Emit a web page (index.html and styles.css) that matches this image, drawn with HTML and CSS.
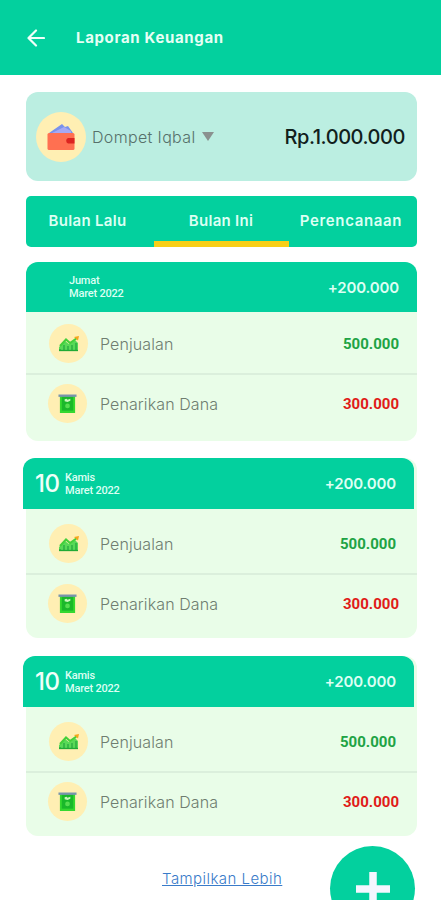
FILE: index.html
```html
<!DOCTYPE html>
<html lang="id">
<head>
<meta charset="utf-8">
<title>Laporan Keuangan</title>
<link rel="stylesheet" href="styles.css">
</head>
<body>
<svg class="defs" aria-hidden="true">
  <symbol id="chart" viewBox="0 0 20 16">
    <path d="M0 14V11L6 5L10 8L16 4L19 7V15H1Z" fill="#58d957"/>
    <path d="M1 10L7 3.500L11 7L18 2" fill="none" stroke="#43cf3b" stroke-width="2"/>
    <path d="M1 13v2M5 9v6M9 10v5M13 9v6M17 7v8" stroke="#27a83f" stroke-width="1.300"/>
    <path d="M0 14.500H19" stroke="#20aa35" stroke-width="1.300"/>
    <path d="M15 1L20 0L19 4.500Z" fill="#f6a51b"/>
  </symbol>
  <symbol id="cash" viewBox="0 0 20 20">
    <path d="M2 1H18V19.500H2Z" fill="#35d82f"/>
    <path d="M4 2H16V17H4Z" fill="#19b82a"/>
    <path d="M0.500 0H19.500V2.500H0.500Z" fill="#7894ac"/>
    <path d="M7 5L9 4.500L10 5.500L13 4.500V6.500L10 8L7 7Z" fill="#c8f5bc"/>
    <circle cx="10" cy="12" r="2.500" fill="#55dd50"/>
  </symbol>
</svg>
<header class="topbar">
  <svg class="back" viewBox="0 0 18 18"><path d="M17 9H2M9 1.500L1.500 9L9 16.500"/></svg>
  <h1>Laporan Keuangan</h1>
</header>
<main>
  <section class="wallet">
    <span class="wallet-icon"><svg viewBox="0 0 28 28"><path d="M2 10L15 1L18 4L21 3L26 10Z" fill="#7992ec"/><path d="M5 10L17 4L24 8V11Z" fill="#a6a9f3"/><rect x="0.500" y="10" width="27" height="17" rx="1.500" fill="#ff7051"/><path d="M27.500 15H21A3 3 0 0 0 21 20.500H27.500Z" fill="#dc2420"/></svg></span>
    <span class="wallet-name">Dompet Iqbal</span>
    <svg class="caret" viewBox="0 0 12 9"><path d="M0 0H12L6 9Z"/></svg>
    <strong>Rp.1.000.000</strong>
  </section>
  <nav class="tabs">
    <a class="tab last-month">Bulan Lalu</a>
    <a class="tab active">Bulan Ini</a>
    <a class="tab plan">Perencanaan</a>
  </nav>
  <section class="group first">
    <header class="day"><p>Jumat<br>Maret 2022</p><b>+200.000</b></header>
    <div class="row"><span class="disc"><svg class="chart"><use href="#chart"/></svg></span><span class="label sales">Penjualan</span><b class="in">500.000</b></div>
    <div class="row second"><span class="disc"><svg class="cash"><use href="#cash"/></svg></span><span class="label">Penarikan Dana</span><b class="out">300.000</b></div>
  </section>
  <section class="group">
    <header class="day"><span class="date">10</span><p>Kamis<br>Maret 2022</p><b>+200.000</b></header>
    <div class="row"><span class="disc"><svg class="chart"><use href="#chart"/></svg></span><span class="label sales">Penjualan</span><b class="in">500.000</b></div>
    <div class="row second"><span class="disc"><svg class="cash"><use href="#cash"/></svg></span><span class="label">Penarikan Dana</span><b class="out">300.000</b></div>
  </section>
  <section class="group">
    <header class="day"><span class="date">10</span><p>Kamis<br>Maret 2022</p><b>+200.000</b></header>
    <div class="row"><span class="disc"><svg class="chart"><use href="#chart"/></svg></span><span class="label sales">Penjualan</span><b class="in">500.000</b></div>
    <div class="row second"><span class="disc"><svg class="cash"><use href="#cash"/></svg></span><span class="label">Penarikan Dana</span><b class="out">300.000</b></div>
  </section>
  <a class="more">Tampilkan Lebih</a>
</main>
<button class="fab" aria-label="Tambah"><svg viewBox="0 0 34 34"><path d="M17 0V34M0 17H34"/></svg></button>
</body>
</html>
```
FILE: styles.css
```css
* { box-sizing: border-box; }
html, body { height: 900px; overflow: hidden; }
body { margin: 0; background: #fff; font-family: Inter, sans-serif; position: relative; }
.defs { display: none; }
svg { display: block; flex: none; }
h1, p { margin: 0; }

.topbar { height: 75px; background: #03d09e; display: flex; align-items: center; padding-left: 27px; color: #e6fff5; }
.back { width: 18px; height: 18px; fill: none; stroke: #effff9; stroke-width: 2.2; stroke-linecap: round; stroke-linejoin: round; }
.topbar h1 { margin-left: 31px; font-size: 15px; font-weight: 700; letter-spacing: 0.65px; white-space: nowrap; }

main { padding: 17px 24px 0 26px; }
.wallet { height: 89px; border-radius: 12px; background: #bbeee1; display: flex; align-items: center; padding: 0 12px 0 10px; }
.wallet-icon { width: 50px; height: 50px; border-radius: 50%; background: #ffefb3; display: flex; align-items: center; justify-content: center; }
.wallet-icon svg { width: 28px; height: 28px; }
.wallet-name { margin-left: 6px; width: 104px; font-size: 16px; font-weight: 300; letter-spacing: 0.35px; color: #56706a; white-space: nowrap; }
.caret { width: 12px; height: 9px; margin-left: 6px; fill: #8a918f; }
.wallet strong { margin-left: auto; font-size: 20px; font-weight: 500; letter-spacing: -0.45px; color: #10201c; }

.tabs { height: 51px; margin-top: 15px; border-radius: 5px; background: #03d09e; display: grid; grid-template-columns: 128px 135px 128px; overflow: hidden; }
.tab { display: flex; align-items: center; justify-content: center; padding-bottom: 2px; font-size: 15px; font-weight: 600; letter-spacing: 0.3px; color: #dcfff3; white-space: nowrap; border-bottom: 0 solid #f8cf17; }
.last-month { padding-right: 5px; }
.active { border-bottom-width: 6px; padding: 4px 1px 0 0; }
.plan { padding-right: 4px; letter-spacing: 0.65px; }

.group { margin-top: 19px; height: 180px; border-radius: 12px; background: #e9fde8; }
.group.first { margin: 15px 0 17px; height: 179px; }
.group.first + .group { margin-top: 17px; }
.group:last-of-type { margin-top: 18px; }
.day { height: 51px; margin: 0 3px 0 -3px; padding: 0 18px 0 12px; border-radius: 12px 12px 0 0; background: #03d09e; display: flex; align-items: center; color: #dcfff3; }
.first .day { margin: 0; padding-left: 43px; height: 50px; }
.date { width: 30px; font-size: 24px; font-weight: 500; letter-spacing: -0.5px; color: #effff9; }
.day p { font: 500 11px/13px Roboto, sans-serif; letter-spacing: -0.2px; }
.day b { margin-left: auto; font-size: 15px; font-weight: 600; letter-spacing: -0.15px; }
.row { height: 64px; display: flex; align-items: center; padding: 5px 18px 0 23px; }
.first .row { height: 61px; padding-top: 2px; }
.row.second, .first .row.second { border-top: 2px solid #dbefdc; height: 65px; padding: 0 18px 6px 22px; }
.disc { width: 39px; height: 39px; border-radius: 50%; background: #ffefb3; display: flex; align-items: center; justify-content: center; }
.chart { width: 20px; height: 16px; }
.cash { width: 19px; height: 20px; }
.label { margin-left: 13px; font-size: 16px; font-weight: 300; letter-spacing: 0.1px; color: #6f7d70; white-space: nowrap; }
.sales { margin-left: 12px; }
.row b { margin-left: auto; font: 700 15px Roboto, sans-serif; letter-spacing: 0; }
.in { color: #20a344; }
.group:not(.first) .in { margin-right: 3px; }
.out { color: #e01b18; }
.more { display: block; width: 120px; margin: 33px 0 0 136px; font-size: 15px; font-weight: 300; line-height: 20px; letter-spacing: 0.45px; color: #397bc9; text-decoration: underline; white-space: nowrap; }
.fab { position: absolute; left: 330px; top: 846px; width: 85px; height: 85px; border: 0; border-radius: 50%; background: #03d09e; display: flex; align-items: center; justify-content: center; padding: 0; }
.fab svg { width: 34px; height: 34px; stroke: #f4f6ff; stroke-width: 7.5; }
```
